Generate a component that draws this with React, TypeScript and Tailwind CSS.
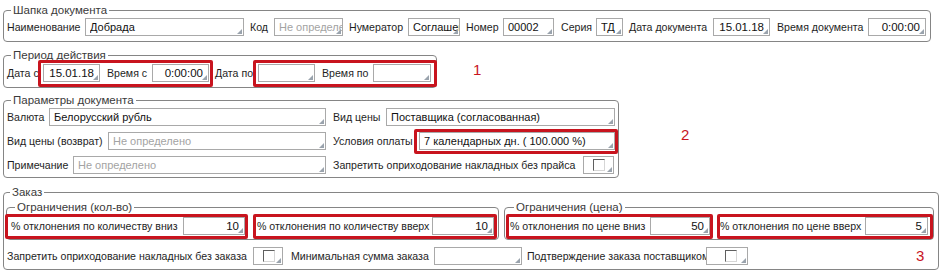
import type { ReactNode } from "react";

function Corner() {
  return (
    <svg className="absolute right-[1px] bottom-[1px]" width="5" height="5" viewBox="0 0 5 5">
      <path d="M5 0 L5 5 L0 5 Z" fill="#9aa3ad" />
    </svg>
  );
}

function Input({
  className,
  value,
  placeholder,
  right,
}: {
  className: string;
  value?: string;
  placeholder?: string;
  right?: boolean;
}) {
  return (
    <div
      className={`relative h-[18px] shrink-0 overflow-hidden whitespace-nowrap border border-[#a9a9a9] bg-white leading-[16px] ${
        right ? "pr-[5px] text-right text-[11.5px]" : "pl-[4px] text-[11px]"
      } ${className}`}
    >
      {value ? (
        <span className="block overflow-hidden text-[#111]">{value}</span>
      ) : (
        <span className="block overflow-hidden text-[#a3a3a3]">{placeholder}</span>
      )}
      <Corner />
    </div>
  );
}

function Check({ className, inner }: { className: string; inner: string }) {
  return (
    <div className={`relative flex h-[18px] shrink-0 items-center border border-[#a9a9a9] bg-white ${className}`}>
      <div
        className={`h-[12px] w-[12px] border-t border-l border-r border-b border-t-[#5f5f5f] border-l-[#5f5f5f] border-r-[#d6d6d6] border-b-[#d6d6d6] ${inner}`}
      />
      <Corner />
    </div>
  );
}

function Label({ className, children }: { className: string; children: ReactNode }) {
  return (
    <span className={`shrink-0 whitespace-nowrap text-[10.6px] leading-[18px] text-[#1e1e1e] ${className}`}>
      {children}
    </span>
  );
}

function Group({
  title,
  className,
  children,
}: {
  title: string;
  className: string;
  children: ReactNode;
}) {
  return (
    <fieldset className={`shrink-0 rounded-[4px] border border-[#858585] ${className}`}>
      <legend className="ml-[4px] px-[2px] text-[11.5px] leading-[14px] text-[#3a3a3a]">{title}</legend>
      {children}
    </fieldset>
  );
}

const redBox = "pointer-events-none absolute rounded-[2px] border-[3px] border-[#c8141e]";

export default function App() {
  return (
    <div className="relative h-[274px] w-[945px] overflow-hidden bg-white font-['Liberation_Sans',Arial,sans-serif]">
      <div className="flex flex-col">
        {/* Шапка документа */}
        <Group title="Шапка документа" className="mt-[3px] ml-[3px] w-[928px] pt-[1px] pb-[5px] pl-[3px]">
          <div className="flex items-center">
            <Label className="w-[78px]">Наименование</Label>
            <Input className="w-[159px]" value="Добрада" />
            <Label className="w-[30px] pl-[6px]">Код</Label>
            <Input className="w-[69px]" placeholder="Не определено" />
            <Label className="w-[65px] pl-[6px]">Нумератор</Label>
            <Input className="w-[52px]" value="Соглашение" />
            <Label className="w-[43px] pl-[6px]">Номер</Label>
            <Input className="w-[51px]" value="00002" />
            <Label className="w-[42px] pl-[7px]">Серия</Label>
            <Input className="w-[27px]" value="ТД" />
            <Label className="w-[90px] pl-[6px]">Дата документа</Label>
            <Input className="w-[57px]" value="15.01.18" right />
            <Label className="w-[98px] pl-[7px]">Время документа</Label>
            <Input className="w-[58px]" value="0:00:00" right />
          </div>
        </Group>

        {/* Период действия */}
        <div className="mt-[6px] flex items-center">
          <Group title="Период действия" className="ml-[3px] w-[434px] pt-[2px] pb-[5px] pl-[3px]">
            <div className="flex items-center">
              <Label className="w-[36px]">Дата с</Label>
              <Input className="w-[57px]" value="15.01.18" right />
              <Label className="w-[52px] pl-[7px]">Время с</Label>
              <Input className="w-[57px]" value="0:00:00" right />
              <Label className="w-[49px] pl-[6px]">Дата по</Label>
              <Input className="w-[57px]" />
              <Label className="w-[58px] pl-[7px]">Время по</Label>
              <Input className="w-[58px]" />
            </div>
          </Group>
          <span className="ml-[36px] mt-[4px] text-[15px] text-[#c8141e]">1</span>
        </div>

        {/* Параметры документа */}
        <div className="mt-[5px] flex items-center">
          <Group title="Параметры документа" className="ml-[3px] w-[616px] pt-[1px] pb-[3px] pl-[3px]">
            <div className="flex flex-col gap-[6px]">
              <div className="flex items-center">
                <div className="flex w-[319px] items-center">
                  <Label className="w-[42px]">Валюта</Label>
                  <Input className="w-[277px]" value="Белорусский рубль" />
                </div>
                <Label className="w-[60px] pl-[7px]">Вид цены</Label>
                <Input className="w-[229px]" value="Поставщика (согласованная)" />
              </div>
              <div className="flex items-center">
                <div className="flex w-[319px] items-center">
                  <Label className="w-[101px]">Вид цены (возврат)</Label>
                  <Input className="w-[218px]" placeholder="Не определено" />
                </div>
                <Label className="w-[93px] pl-[7px]">Условия оплаты</Label>
                <Input className="w-[196px]" value="7 календарных дн. ( 100.000 %)" />
              </div>
              <div className="flex items-center">
                <div className="flex w-[319px] items-center">
                  <Label className="w-[66px]">Примечание</Label>
                  <Input className="w-[253px]" placeholder="Не определено" />
                </div>
                <Label className="w-[257px] pl-[7px]">Запретить оприходование накладных без прайса</Label>
                <Check className="w-[31px]" inner="ml-[9px]" />
              </div>
            </div>
          </Group>
          <span className="ml-[62px] text-[15px] text-[#c8141e]">2</span>
        </div>

        {/* Заказ */}
        <Group title="Заказ" className="mt-[7px] ml-[3px] w-[936px] pt-[1px] pb-[4px] pl-[2px]">
          <div className="flex gap-[5px]">
            <Group title="Ограничения (кол-во)" className="w-[493px] pt-[3px] pb-[4px] pl-[4px]">
              <div className="flex items-center">
                <Label className="w-[172px]">% отклонения по количеству вниз</Label>
                <Input className="w-[62px]" value="10" right />
                <Label className="w-[187px] pl-[12px]">% отклонения по количеству вверх</Label>
                <Input className="w-[62px]" value="10" right />
              </div>
            </Group>
            <Group title="Ограничения (цена)" className="w-[430px] pt-[3px] pb-[4px] pl-[5px]">
              <div className="flex items-center">
                <Label className="w-[140px]">% отклонения по цене вниз</Label>
                <Input className="w-[60px]" value="50" right />
                <Label className="w-[155px] pl-[10px]">% отклонения по цене вверх</Label>
                <Input className="w-[63px]" value="5" right />
              </div>
            </Group>
          </div>
          <div className="mt-[7px] flex items-center pl-[1px]">
            <Label className="w-[246px]">Запретить оприходование накладных без заказа</Label>
            <Check className="w-[30px]" inner="ml-[9px]" />
            <Label className="w-[151px] pl-[8px]">Минимальная сумма заказа</Label>
            <Input className="w-[88px]" />
            <Label className="w-[184px] pl-[5px]">Подтверждение заказа поставщиком</Label>
            <Check className="w-[42px]" inner="ml-[18px]" />
            <span className="ml-[168px] text-[15px] leading-[18px] text-[#c8141e]">3</span>
          </div>
        </Group>
      </div>

      {/* annotation frames */}
      <div className={`${redBox} left-[38px] top-[60px] h-[27px] w-[175px]`} />
      <div className={`${redBox} left-[253px] top-[60px] h-[27px] w-[184px]`} />
      <div className={`${redBox} left-[414px] top-[129px] h-[25px] w-[204px]`} />
      <div className={`${redBox} left-[5px] top-[214px] h-[25px] w-[243px]`} />
      <div className={`${redBox} left-[253px] top-[214px] h-[25px] w-[244px]`} />
      <div className={`${redBox} left-[506px] top-[214px] h-[25px] w-[207px]`} />
      <div className={`${redBox} left-[717px] top-[214px] h-[25px] w-[216px]`} />
    </div>
  );
}
